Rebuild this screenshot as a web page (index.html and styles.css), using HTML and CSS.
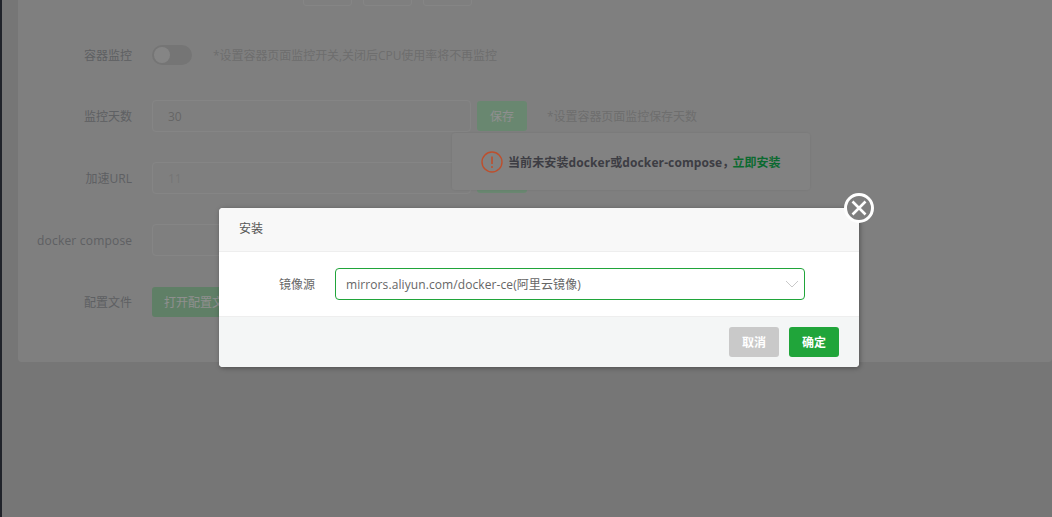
FILE: index.html
```html
<!DOCTYPE html>
<html lang="zh-CN">
<head>
<meta charset="utf-8">
<title>安装</title>
<link rel="stylesheet" href="styles.css">
</head>
<body>
<div class="page">
  <aside class="sidebar"></aside>
  <main class="main">
    <section class="card">
      <div class="top-buttons">
        <span class="mini-btn"></span>
        <span class="mini-btn"></span>
        <span class="mini-btn"></span>
      </div>
      <div class="row row-switch">
        <label class="label">容器监控</label>
        <span class="switch"><span class="knob"></span></span>
        <span class="hint hint-switch">*设置容器页面监控开关,关闭后CPU使用率将不再监控</span>
      </div>
      <div class="row">
        <label class="label">监控天数</label>
        <div class="input">30</div>
        <button class="btn save">保存</button>
        <span class="hint">*设置容器页面监控保存天数</span>
      </div>
      <div class="row">
        <label class="label">加速URL</label>
        <div class="input muted">11</div>
        <button class="btn save">保存</button>
      </div>
      <div class="row">
        <label class="label label-latin">docker compose</label>
        <div class="input"></div>
        <button class="btn save">保存</button>
      </div>
      <div class="row">
        <label class="label">配置文件</label>
        <button class="btn open">打开配置文件</button>
      </div>
    </section>
  </main>
</div>

<div class="notice">
  <svg class="notice-icon" width="22" height="22" viewBox="0 0 22 22" aria-hidden="true">
    <circle cx="11" cy="11" r="10" fill="none" stroke="#bd4f2d" stroke-width="1.4"/>
    <path d="M11 5.5v7.5" stroke="#bd4f2d" stroke-width="1.6" fill="none"/>
    <circle cx="11" cy="16" r="1" fill="#bd4f2d"/>
  </svg>
  <span class="notice-text">当前未安装docker或docker-compose，<a class="notice-link">立即安装</a></span>
</div>

<div class="overlay"></div>

<div class="dialog">
  <header class="dialog-head">安装</header>
  <div class="dialog-body">
    <label class="dialog-label">镜像源</label>
    <div class="select">
      <span>mirrors.aliyun.com/docker-ce(阿里云镜像)</span>
      <svg width="14" height="8" viewBox="0 0 14 8" aria-hidden="true"><path d="M1 1l6 6 6-6" fill="none" stroke="#c9c9c9" stroke-width="1"/></svg>
    </div>
  </div>
  <footer class="dialog-foot">
    <button class="btn cancel">取消</button>
    <button class="btn ok">确定</button>
  </footer>
  <button class="close" aria-label="关闭">
    <svg width="24" height="24" viewBox="0 0 24 24" aria-hidden="true"><path d="M5.5 5.5l13 13M18.5 5.5l-13 13" stroke="#fff" stroke-width="2.6" fill="none"/></svg>
  </button>
</div>
</body>
</html>
```
FILE: styles.css
```css
* { box-sizing: border-box; }
html, body { margin: 0; height: 100%; overflow: hidden; }
body {
  font-family: "Open Sans", "Noto Sans CJK SC", sans-serif;
  font-size: 12px;
  color: #666;
  background: #d3d3d3;
}
.page { display: flex; height: 517px; overflow: hidden; }
.sidebar { width: 2px; flex: none; background: #393f4b; }
.main { flex: 1; padding-left: 16px; background: #d3d3d3; }
.card {
  height: 388px;
  margin-top: -26px;
  background: #e3e3e3;
  border-radius: 4px;
  display: flex;
  flex-direction: column;
  gap: 30px;
  padding-left: 19px;
}
.top-buttons { display: flex; gap: 11px; height: 32px; padding-left: 266px; margin-bottom: 3px; }
.mini-btn { width: 49px; border: 1px solid #eeeeee; border-radius: 3px; }
.row { display: flex; align-items: center; height: 32px; }
.row-switch { height: 31px; }
.label { width: 95px; flex: none; text-align: right; margin-right: 20px; color: #a8abb0; white-space: nowrap; }
.label-latin { letter-spacing: .2px; }
.input {
  width: 319px; height: 32px; line-height: 32px;
  padding-left: 15px;
  border: 1px solid #eeeeee; border-radius: 4px;
  color: #b6b6b6;
}
.muted { color: #d1d1d1; }
.btn {
  font: inherit; border: 0; border-radius: 3px;
  height: 30px; color: #fff; cursor: pointer; padding: 0;
}
.save { width: 50px; margin-left: 6px; background: #bcf0c8; }
.open { width: 96px; background: #aae3b6; }
.switch { width: 40px; height: 20px; border-radius: 10px; background: #d0d0d0; padding: 2px; display: block; }
.knob { display: block; width: 16px; height: 16px; border-radius: 50%; background: #eeeeee; }
.hint { color: #c4c4c4; margin-left: 20px; letter-spacing: -.05px; }
.hint-switch { margin-left: 21px; }

.notice {
  position: absolute; left: 452px; top: 133px;
  width: 358px; height: 57px;
  background: #e8e8e8; border-radius: 3px;
  box-shadow: 0 0 3px rgba(0,0,0,.08);
  display: flex; align-items: center; gap: 5px; padding-left: 29px;
  font-weight: 700; color: #6d6d78; letter-spacing: .1px;
}
.notice-icon { flex: none; position: relative; z-index: 2; }
.notice-link { color: #15bd56; letter-spacing: 0; margin-left: -2px; }

.overlay { position: absolute; inset: 0; z-index: 1; background: rgba(0,0,0,.44); }

.dialog {
  position: absolute; left: 219px; top: 208px; z-index: 3;
  width: 640px; height: 159px;
  background: #fff; border-radius: 4px;
  box-shadow: 1px 1px 5px rgba(0,0,0,.35);
  display: flex; flex-direction: column;
}
.dialog-head {
  height: 44px; line-height: 42px; padding-left: 20px;
  background: #f8f8f8; border-bottom: 1px solid #eee;
  border-radius: 4px 4px 0 0; color: #555;
}
.dialog-body { height: 64px; display: flex; align-items: center; color: #666; }
.dialog-label { width: 96px; text-align: right; margin-right: 20px; }
.select {
  width: 470px; height: 32px;
  border: 1px solid #20a53a; border-radius: 4px;
  display: flex; align-items: center; justify-content: space-between;
  padding: 0 5px 0 10px;
  color: #666; letter-spacing: .09px;
}
.dialog-foot {
  flex: 1; background: #f4f6f6; border-top: 1px solid #eee;
  border-radius: 0 0 4px 4px;
  display: flex; justify-content: flex-end; align-items: flex-start; gap: 10px;
  padding: 10px 20px 0 0;
}
.cancel { width: 50px; background: #c9c9c9; font-weight: 700; }
.ok { width: 50px; background: #20a53a; font-weight: 700; }
.close {
  position: absolute; right: -15px; top: -15px;
  width: 30px; height: 30px; padding: 0;
  border: 3px solid #fff; border-radius: 50%;
  background: #7f7f7f;
  display: flex; align-items: center; justify-content: center;
}
```
